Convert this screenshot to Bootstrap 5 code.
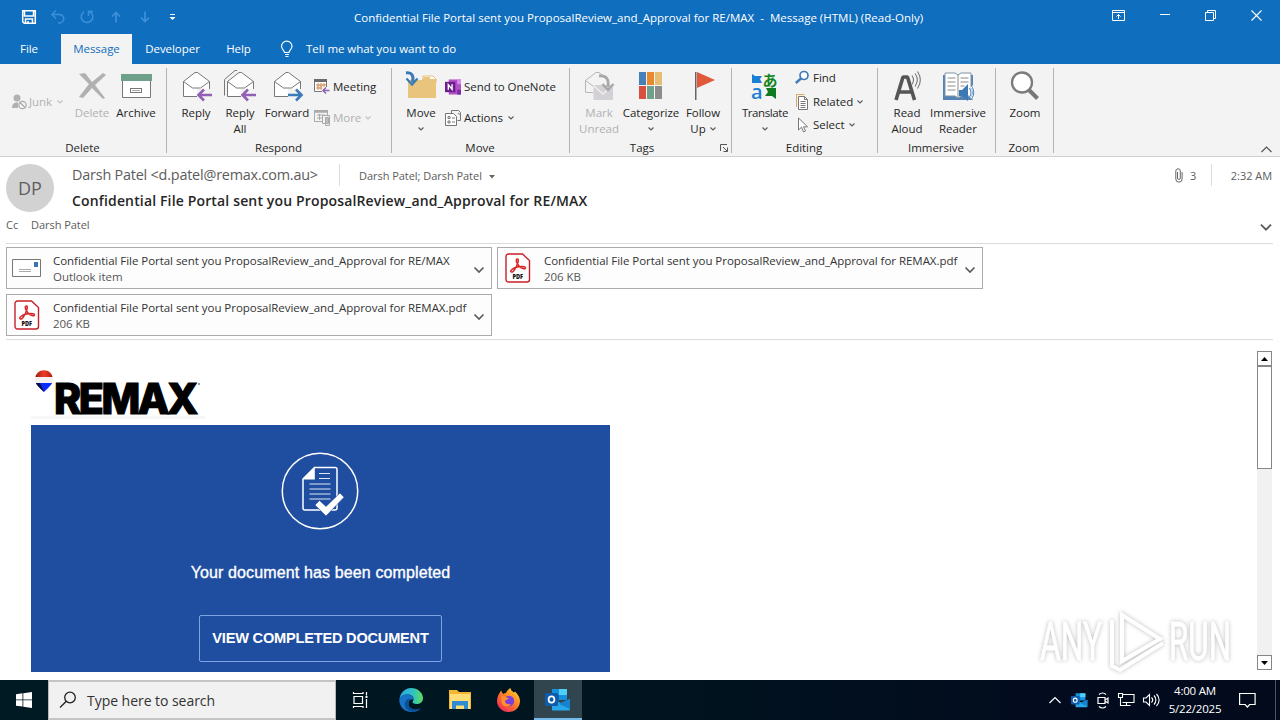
<!DOCTYPE html>
<html lang="en">
<head>
<meta charset="utf-8">
<meta name="viewport" content="width=device-width, initial-scale=1">
<title>Message (HTML) (Read-Only)</title>
<link rel="stylesheet" href="https://cdn.jsdelivr.net/npm/bootstrap@5.3.0/dist/css/bootstrap.min.css">
<style>
html,body{height:720px;overflow:hidden}
body{font-family:"Open Sans","Noto Sans",sans-serif;font-size:11.5px;line-height:16px;letter-spacing:-.04px;color:#262626;background:#fff}
svg{display:block;flex:none;overflow:visible}
.chrome{background:#106ebe;color:#fff}
.titlebar{height:34px}
.t-title{letter-spacing:.01px;padding-top:1px}
.quick{width:354px;padding-left:20px}
.quick>*{width:18px;margin-right:11px;display:flex;justify-content:center}
.winbtn{width:46px;height:30px;display:flex;align-items:center;justify-content:center;padding-right:2px}
.tabs{height:30px}
.tabs>*{line-height:30px}
.tab-file{width:61px;padding-left:20px}
.tab-on{width:71px;background:#f3f3f3;color:#106ebe;text-align:center}
.tab-dev{width:81px;text-align:center}
.tab-help{width:51px;text-align:center}
.ribbon{height:93px;background:#f3f3f3;border-bottom:1px solid #d2d0ce}
.grp{position:relative;display:flex;flex-direction:column}
.grp::after{content:"";position:absolute;right:0;top:4px;height:85px;width:1px;background:#b3b3b3}
.grp-main{height:76px;display:flex}
.grp-name{text-align:center;line-height:16px;padding-right:2px}
.big{padding-top:6px;display:flex;flex-direction:column;align-items:center;text-align:center;white-space:nowrap}
.big svg.ico{margin-bottom:3px;width:32px;height:32px}
.small-cmd{display:flex;align-items:center;white-space:nowrap;height:24px}
.w44{width:44px}.w46{width:46px}.w50{width:50px}.w58{width:58px}.w60{width:60px}.w70{width:70px}
.off{color:#b1b1b1}
.tight{letter-spacing:-.4px}
.chev{margin:5px auto}
.msg-head{height:87px;padding:7px 7px 0 6px;border:0;color:#5c5c5c;font-size:11px}
.avatar{width:48px;height:48px;border-radius:50%;background:#d2d2d2;color:#5f5f5f;font-size:18px}
.sender{font-size:14.4px;line-height:22px;width:267px;white-space:nowrap;letter-spacing:-.2px}
.meta{padding-top:2px}
.vline{width:1px;height:22px;background:#dcdcdc}
.subject{font-size:14px;font-weight:600;line-height:20px;color:#262626;white-space:nowrap;letter-spacing:.15px}
.rule{height:1px;background:#dcdcdc;margin:0 7px 0 6px}
.att{width:486px;height:42px;border:1px solid #ababab;background:#fdfdfd;line-height:16px;color:#333;display:flex;align-items:center;white-space:nowrap}
.att .att-ico{width:46px;padding-left:5px;flex:none}
.att .att-ico.doc{padding-left:7px}
.att .att-txt{padding-top:2px}
.att .att-sub{color:#555}
.reading{height:340px}
.mail{padding:27px 0 0 31px;width:1257px}
.card-blue{width:579px;height:247px;background:#1f4ea1;color:#fff;margin-top:4px;font-family:"Liberation Sans",Arial,sans-serif;display:flex;flex-direction:column;align-items:center}
.done{font-size:16px;line-height:20px;margin-top:33px;letter-spacing:.13px;-webkit-text-stroke:.35px #fff}
.view{width:243px;height:47px;border:1px solid #7ea3e4;border-radius:2px;margin-top:32px;font-weight:700;font-size:14.6px;letter-spacing:-.22px;display:flex;align-items:center;justify-content:center;padding-bottom:2px;white-space:nowrap}
.scroller{width:15px;height:319px;background:#f1f1f1;margin-top:11px;display:flex;flex-direction:column}
.scroller div{border:1px solid #868686;background:#fff;display:flex;align-items:center;justify-content:center}
.watermark{position:absolute;left:1030px;top:602px;filter:drop-shadow(0 0 2px #bbb)}
.taskbar{height:40px;background:linear-gradient(90deg,#001a23 0,#00151f 45%,#020c1e 80%,#020a1c);color:#fff}
.search{width:288px;height:40px;background:#f1f1f1;border:1px solid #b8b8b8;border-top:2px solid #c4c4c4;border-bottom:2px solid #c4c4c4;color:#333;font-size:14px;padding-left:10px}
.task{width:49px;height:40px;display:flex;align-items:center;justify-content:center}
.task-on{background:#31454f;border-bottom:2px solid #76b9ed;padding-top:2px}
.clock{width:56px;text-align:center;font-size:11.5px;line-height:18px;letter-spacing:-.2px;white-space:nowrap;display:flex;flex-direction:column;align-items:center}
</style>
</head>
<body>
<svg width="0" height="0" class="position-absolute">
<defs>
<symbol id="cv" viewBox="0 0 6 6"><path d="M.5 1.500L3 4 5.500 1.500" fill="none" stroke="currentColor" stroke-opacity=".75" stroke-width="1.100"/></symbol>
<symbol id="down" viewBox="0 0 12 8"><path d="M1.500 1.500L6 6l4.500-4.500" fill="none" stroke="#5c5c5c" stroke-width="1.700"/></symbol>
<symbol id="env" viewBox="0 0 32 32"><path d="M3.500 11.500L15 2.500h2.500L29.500 11.500V26.500h-26z" fill="#fff" stroke="#777"/><path d="M3.500 11.500l9 6.500h8l9-6.500" fill="none" stroke="#777"/></symbol>
<symbol id="pdf" viewBox="0 0 26 30"><path d="M3.500 1h14L24.500 7.500V26.500a2.500 2.500 0 0 1-2.500 2.500H3.500A2.500 2.500 0 0 1 1 26.500V3.500A2.500 2.500 0 0 1 3.500 1z" fill="#fff" stroke="#c8202a" stroke-width="1.400"/><path d="M12.500 6c-2.500 0-.8 4.500 1.500 7 2 2.500 6.500 3.700 6.500 1.800 0-2-6-1.600-9.200-.5-3.300 1.200-6.500 3.200-5.300 4.500 1.600 1.400 4-2.300 5.500-5.500 1.300-3 2.700-7.300 1-7.300z" fill="none" stroke="#dc2626" stroke-width="1.500"/><text x="7.500" y="25.500" font-family="Open Sans,sans-serif" font-size="6" font-weight="800" fill="#111" textLength="10.500" lengthAdjust="spacingAndGlyphs">PDF</text></symbol>
<symbol id="outlook" viewBox="0 0 26 26"><path d="M7 2h14a1 1 0 0 1 1 1v10H7z" fill="#1490df"/><path d="M14 2h8v6h-8z" fill="#50d0f8"/><path d="M7 8h7v6H7z" fill="#0a62b5"/><path d="M7 12l9 4 9-4v10a1.500 1.500 0 0 1-1.500 1.500H7z" fill="#28a8ea"/><path d="M25 12v10L14 17z" fill="#1683cf"/><rect y="6" width="13" height="13" rx="1" fill="#0f5cad"/><ellipse cx="6.500" cy="12.500" rx="2.900" ry="3.200" fill="none" stroke="#fff" stroke-width="1.700"/></symbol>
</defs>
</svg>

<header class="chrome">
  <div class="titlebar d-flex">
    <div class="quick d-flex align-items-center">
      <span><svg width="16" height="16" viewBox="0 0 16 16" fill="none" stroke="#fff" stroke-width="1.500"><path d="M1.700 1.700h12.600v12.600H3.200l-1.500-1.500zM3.500 2v5h9V2M4.500 14v-4h7v4M7 12v2"/></svg></span>
      <span><svg width="16" height="16" viewBox="0 0 16 16" fill="none" stroke="#3d90da" stroke-width="1.500"><path d="M6 1.500L2 5.500l4 4M2 5.500h7.500a4 4 0 0 1 0 8.500H8"/></svg></span>
      <span><svg width="16" height="16" viewBox="0 0 16 16" fill="none" stroke="#3d90da" stroke-width="1.500"><path d="M5 2.800a5.800 5.800 0 1 0 6 0M9.500 7V2.500H14"/></svg></span>
      <span><svg width="12" height="14" viewBox="0 0 12 14" fill="none" stroke="#3d90da" stroke-width="1.700"><path d="M6 12.500v-10M2 6.500l4-4 4 4"/></svg></span>
      <span><svg width="12" height="14" viewBox="0 0 12 14" fill="none" stroke="#3d90da" stroke-width="1.700"><path d="M6 1.500v10M2 7.500l4 4 4-4"/></svg></span>
      <span class="pe-1"><svg width="7" height="8" viewBox="0 0 7 8"><path d="M1 1h5v1H1zM.5 4h6l-3 3z" fill="#fff"/></svg></span>
    </div>
    <div class="t-title text-nowrap lh-1 align-self-center">Confidential File Portal sent you ProposalReview_and_Approval for RE/MAX&nbsp; -&nbsp; Message (HTML) (Read-Only)</div>
    <div class="ms-auto d-flex">
      <div class="winbtn"><svg width="13" height="11" viewBox="0 0 13 11" fill="none" stroke="#fff"><path d="M.5.500h12v10H.5zM.5 2.500h12M6.500 9V4.500M4.500 6.500l2-2 2 2"/></svg></div>
      <div class="winbtn"><svg width="11" height="11" viewBox="0 0 11 11" stroke="#fff"><path d="M1 4.500h10"/></svg></div>
      <div class="winbtn"><svg width="11" height="11" viewBox="0 0 11 11" fill="none" stroke="#fff"><path d="M.5 2.500h8v8h-8zM2.500 2.500V.500h8v8h-2"/></svg></div>
      <div class="winbtn"><svg width="11" height="11" viewBox="0 0 11 11" stroke="#fff" stroke-width="1.100"><path d="M.5.500l10 10M10.500.500l-10 10"/></svg></div>
    </div>
  </div>
  <nav class="tabs d-flex">
    <span class="tab-file">File</span><span class="tab-on">Message</span><span class="tab-dev">Developer</span><span class="tab-help">Help</span>
    <span class="d-flex align-items-center ps-3"><svg width="14" height="18" viewBox="0 0 14 18" fill="none" stroke="#fff" stroke-width="1.200"><path d="M4.500 12.500c0-2-3-3-3-6.200a5.200 5.200 0 0 1 10.500 0c0 3.200-3 4.200-3 6.200zM5 14.500h4M5.500 16.500h3"/></svg><span class="ms-2 ps-1">Tell me what you want to do</span></span>
  </nav>
</header>

<div class="ribbon d-flex position-relative">
  <section class="grp" style="width:167px"><div class="grp-main">
    <div class="w70 off d-flex align-items-center justify-content-start text-nowrap" style="padding-left:11px"><svg width="17" height="18" viewBox="0 0 17 18"><circle cx="6" cy="5" r="3.500" fill="#b1b1b1"/><path d="M1 15c0-5 3-6 6-5.500L7 15z" fill="#b1b1b1"/><circle cx="11.500" cy="12" r="3.700" fill="#f3f3f3" stroke="#aaa" stroke-width="1.200"/><path d="M9 9.500l5 5" stroke="#aaa" stroke-width="1.200"/></svg><span style="margin-left:1px">Junk</span><svg style="margin-left:5px" width="6" height="6"><use href="#cv"/></svg></div>
    <div class="big w44 off"><svg class="ico" viewBox="0 0 32 32"><path d="M3 4l6-1 7 9 11-9 3 2-11 10 10 13-2 1-11-11-9 10-4-1 10-13z" fill="#b1b1b1"/></svg>Delete</div>
    <div class="big w44"><svg class="ico" viewBox="0 0 32 32"><path d="M2.500 10v17.500h28V10" fill="#fff" stroke="#777"/><rect x="1" y="4" width="31" height="7" fill="#6fa08c"/><rect x="10.500" y="18.500" width="11" height="4" fill="#fff" stroke="#777"/><path d="M12 20.500h8" stroke="#aaa"/></svg>Archive</div>
  </div><div class="grp-name">Delete</div></section>

  <section class="grp" style="width:225px"><div class="grp-main" style="padding-left:7px">
    <div class="big w44"><svg class="ico" viewBox="0 0 32 32"><use href="#env"/><path d="M17 19h15v10H17z" fill="#f3f3f3"/><path d="M32 25H19M24 19.500L18.500 25l5.500 5.500" fill="none" stroke="#9160b5" stroke-width="2.600"/></svg>Reply</div>
    <div class="big w44"><svg class="ico" viewBox="0 0 32 32"><path d="M.5 25.500V9.500L11 .5h2" fill="none" stroke="#777"/><use href="#env"/><path d="M17 19h15v10H17z" fill="#f3f3f3"/><path d="M32 25H19M24 19.500L18.500 25l5.500 5.500" fill="none" stroke="#9160b5" stroke-width="2.600"/></svg>Reply<br>All</div>
    <div class="big w50"><svg class="ico" viewBox="0 0 32 32"><use href="#env"/><path d="M17 19h15v10H17z" fill="#f3f3f3"/><path d="M17 25h13M25 19.500l5.500 5.500-5.500 5.500" fill="none" stroke="#3a7ab8" stroke-width="2.600"/></svg>Forward</div>
    <div class="d-flex flex-column" style="padding:11px 0 0 2px">
      <div class="small-cmd"><svg width="16" height="16" viewBox="0 0 16 16"><path d="M.5.500h12v12H.5z" fill="#fff" stroke="#777"/><path d="M0 0h13v3H0z" fill="#6b6b6b"/><path d="M3 5h2v2H3zM6 5h2v2H6zM9 5h2v2H9zM3 8h2v2H3zM6 8h2v2H6z" fill="none" stroke="#c87a3a" stroke-width=".8"/><path d="M8 8h8v7H8z" fill="#f3f3f3"/><path d="M15.500 11.500H9.500M12 8.500l-3 3 3 3" fill="none" stroke="#9160b5" stroke-width="1.500"/></svg><span style="margin-left:3px">Meeting</span></div>
      <div class="small-cmd off" style="margin-top:7px"><svg width="17" height="16" viewBox="0 0 17 16" fill="none" stroke="#aaa"><path d="M.5.500h13v11H.5zM3 5h8M3 8h6M5.500 4v6"/><path d="M0 1.500h14" stroke-width="2.500"/><path d="M8.500 5.500h7v10h-4v-2h-3z" fill="#f3f3f3"/><path d="M11.500 7.500h3v6h-3z" fill="#bbb"/></svg><span style="margin-left:2px">More</span><svg class="ms-1" width="6" height="6"><use href="#cv"/></svg></div>
    </div>
  </div><div class="grp-name">Respond</div></section>

  <section class="grp" style="width:178px"><div class="grp-main" style="padding-left:6px">
    <div class="big w46"><svg class="ico" viewBox="0 0 32 32"><path d="M18 6h10l3 3v4H18z" fill="#fff" stroke="#e5c07b"/><path d="M3 10h14l2-3h6v2h6v19H3z" fill="#e8c47c"/><path d="M1 3c6-1 8 3 6.500 9" fill="none" stroke="#3a7ab8" stroke-width="3"/><path d="M1.500 8.500l5.500 6 5.500-6" fill="none" stroke="#3a7ab8" stroke-width="2.200"/></svg>Move<svg class="chev" width="6" height="6"><use href="#cv"/></svg></div>
    <div class="d-flex flex-column" style="padding:11px 0 0 1px">
      <div class="small-cmd"><svg width="16" height="16" viewBox="0 0 17 16"><rect x="4" width="13" height="16" fill="#b14fc5"/><path d="M13 0h4v5h-4z" fill="#d98af0"/><path d="M13 11h4v5h-4z" fill="#7b2aa5"/><rect y="2.500" width="11" height="11" fill="#6b1f8c"/><path d="M3.500 11V5.500l4 5V5" fill="none" stroke="#fff" stroke-width="1.500"/></svg><span style="margin-left:3px">Send to OneNote</span></div>
      <div class="small-cmd" style="margin-top:7px"><svg width="17" height="16" viewBox="0 0 17 16" fill="none" stroke="#777"><path d="M6.500 3V.500h7l2 2v8h-3"/><path d="M.5 3.500h8l3 3v9H.5z" fill="#fff"/><path d="M3 6.500h2v2H3zM3 11h2v2H3zM7 8h3M7 12h3M13 3l2 1.500"/></svg><span style="margin-left:2px">Actions</span><svg style="margin-left:5px" width="6" height="6"><use href="#cv"/></svg></div>
    </div>
  </div><div class="grp-name">Move</div></section>

  <section class="grp" style="width:162px"><div class="grp-main" style="padding-left:7px">
    <div class="big w44 off"><svg class="ico" viewBox="0 0 32 32"><path d="M2.500 22.500v-12L13 2.500h3l10 8" fill="none" stroke="#b5b5b5"/><path d="M2.500 10.500l8 6M10 22.500H3" fill="none" stroke="#b5b5b5"/><path d="M10.500 15h19.500v15H10.500z" fill="#d4d1d6"/><path d="M11 16l9 8 9-8" fill="none" stroke="#eee" stroke-width="1.500"/><path d="M16 6c8-1 10 4 9 11" fill="none" stroke="#a8a8a8" stroke-width="2.800"/><path d="M19.500 14l5.500 6 5.500-6" fill="none" stroke="#a8a8a8" stroke-width="2.400"/></svg>Mark<br>Unread</div>
    <div class="big w60"><svg class="ico" viewBox="0 0 32 32"><path d="M4 2h7v13H4z" fill="#4680b8"/><path d="M12 2h7v13h-7z" fill="#e8892f"/><path d="M20 2h7v13h-7z" fill="#e6bd73"/><path d="M4 16h7v13H4z" fill="#d94f3d"/><path d="M12 16h7v13h-7z" fill="#6fa08c"/><path d="M20 16h7v13h-7z" fill="#8c8c8c"/></svg>Categorize<svg class="chev" width="6" height="6"><use href="#cv"/></svg></div>
    <div class="big w44"><svg class="ico" viewBox="0 0 32 32"><path d="M10 2l18 8-18 8z" fill="#e0593a"/><path d="M8 2h1.500v28H8z" fill="#666"/></svg>Follow<span class="d-flex align-items-center">Up<svg class="ms-1" width="6" height="6"><use href="#cv"/></svg></span></div>
  </div><div class="grp-name" style="padding-right:18px">Tags</div>
  <svg class="position-absolute" style="right:4px;bottom:4px" width="8" height="8" viewBox="0 0 8 8" fill="none" stroke="#555"><path d="M.5 7V.500H7M3 3l4 4M7.500 3.500v4h-4"/></svg></section>

  <section class="grp" style="width:146px"><div class="grp-main" style="padding-left:8px">
    <div class="big w50"><svg class="ico" viewBox="0 0 32 32"><path d="M3 4l3 2h7l-2 3 2 4H3z" fill="#1b7fd4"/><text x="13.500" y="15.500" font-family="Noto Sans CJK JP,sans-serif" font-size="15" font-weight="700" fill="#16851c">あ</text><text x="2" y="29" font-family="Open Sans,sans-serif" font-size="20" font-weight="600" fill="#1b7fd4">a</text><path d="M17 18h10v11l-4-3h-7l3-4z" fill="#0f7a20"/></svg><span class="tight">Translate</span><svg class="chev" width="6" height="6"><use href="#cv"/></svg></div>
    <div class="d-flex flex-column" style="padding:2px 0 0 5px">
      <div class="small-cmd"><svg width="16" height="16" viewBox="0 0 16 16"><circle cx="9" cy="5.500" r="4" fill="#fff" stroke="#3f7cb8" stroke-width="1.700"/><path d="M6 8.500L.8 13" stroke="#3f7cb8" stroke-width="2.400"/></svg><span style="padding-left:2px">Find</span></div>
      <div class="small-cmd" style="height:23px"><svg width="16" height="16" viewBox="0 0 16 16" fill="none" stroke="#777"><path d="M1.500 13V.500h8" stroke="#e0a860"/><path d="M3.500 2.500h6l3 3v10h-9z" fill="#fff"/><path d="M5.500 7.500h5M5.500 9.500h5M5.500 11.500h5M5.500 13.500h5M9.500 2.500v3h3"/></svg><span style="padding-left:2px">Related</span><svg class="ms-1" width="6" height="6"><use href="#cv"/></svg></div>
      <div class="small-cmd"><svg width="16" height="16" viewBox="0 0 16 16"><path d="M3.500 1v12l3-2.800L8.500 15l2-1-2-4.200h4z" fill="#fff" stroke="#777"/></svg><span style="padding-left:2px">Select</span><svg class="ms-1" width="6" height="6"><use href="#cv"/></svg></div>
    </div>
  </div><div class="grp-name">Editing</div></section>

  <section class="grp" style="width:118px"><div class="grp-main" style="padding-left:7px">
    <div class="big w44"><svg class="ico" viewBox="0 0 32 32"><path d="M5 30L12 7h4.500l7 23M8.500 22h11.500" fill="none" stroke="#555" stroke-width="3.600" stroke-linejoin="bevel"/><path d="M21 5.500c2 3 2 6 0 9M24 3.500c3 4 3 8.500 0 13M26.500 1.500c4 6 4 11 0 17" fill="none" stroke="#777" stroke-width="1.100"/></svg>Read<br>Aloud</div>
    <div class="big w58"><svg class="ico" viewBox="0 0 32 32"><path d="M1 5h30v25H1z" fill="#5484b4"/><path d="M3 3h10l3 2 3-2h10v23H19l-3 2-3-2H3z" fill="#fff" stroke="#7f93a8"/><path d="M16 5v22M5.500 8h8M5.500 12h8M5.500 16h8M5.500 20h8M18.500 8h8M18.500 12h8M18.500 16h4" stroke="#8a8a8a"/><path d="M17 20h3l6-6v17l-6-5h-3z" fill="#3c78b4"/><path d="M27.500 18c2 3 2 6 0 9M29.500 16c3 4 3 9 0 13" stroke="#fff" stroke-width="2.400" fill="none"/><path d="M27.500 18c2 3 2 6 0 9M29.500 16c3 4 3 9 0 13" stroke="#3c78b4" fill="none"/></svg>Immersive<br>Reader</div>
  </div><div class="grp-name">Immersive</div></section>

  <section class="grp" style="width:58px"><div class="grp-main" style="padding-left:7px">
    <div class="big w44"><svg class="ico" viewBox="0 0 32 32"><path d="M19 19l9.500 9.500" stroke="#777" stroke-width="4"/><circle cx="13" cy="12.500" r="10" fill="#fff" stroke="#7b7b7b" stroke-width="2.300"/></svg>Zoom</div>
  </div><div class="grp-name">Zoom</div></section>
  <svg class="position-absolute" style="right:8px;bottom:3px" width="11" height="7" viewBox="0 0 11 7"><path d="M.5 6l5-5 5 5" fill="none" stroke="#555" stroke-width="1.200"/></svg>
</div>

<div class="msg-head">
  <div class="d-flex">
    <div class="avatar d-flex align-items-center justify-content-center me-3"><span>DP</span></div>
    <div class="flex-grow-1" style="margin-left:2px">
      <div class="d-flex align-items-center">
        <span class="sender">Darsh Patel &lt;d.patel@remax.com.au&gt;</span><span class="vline"></span>
        <span style="margin-left:19px" class="meta">Darsh Patel; Darsh Patel</span><svg style="margin:3px 0 0 7px" width="6" height="4"><path d="M0 0h6L3 3.500z" fill="#666"/></svg>
        <svg class="ms-auto" width="8" height="15" viewBox="0 0 8 15" fill="none" stroke="#666"><path d="M2.500 4v6a1.300 1.300 0 0 0 2.800 0V3a2.200 2.200 0 0 0-4.500 0v8a3 3 0 0 0 6.300 0V4"/></svg><span class="meta" style="margin-left:7px;width:21px">3</span><span class="vline"></span><span class="meta text-end text-nowrap" style="width:61px;padding-right:1px">2:32 AM</span>
      </div>
      <div class="subject" style="margin-top:5px">Confidential File Portal sent you ProposalReview_and_Approval for RE/MAX</div>
    </div>
  </div>
  <div class="d-flex align-items-center" style="margin-top:5px"><span style="width:25px">Cc</span><span>Darsh Patel</span><svg class="ms-auto mt-1" width="14" height="9"><use href="#down"/></svg></div>
</div>
<div class="rule" style="margin-top:-1px"></div>
<div class="d-flex flex-wrap align-content-start" style="gap:5px;padding:3px 0 0 6px;height:95px">
  <div class="att"><span class="att-ico"><svg width="30" height="18" viewBox="0 0 30 18"><path d="M.5.500h28v17H.5z" fill="#fff" stroke="#777"/><path d="M22 3h4v5h-4z" fill="#3f74b0"/><path d="M7 10.500h12M7 12.500h12" stroke="#aaa"/></svg></span><span class="att-txt">Confidential File Portal sent you ProposalReview_and_Approval for RE/MAX<br><span class="att-sub">Outlook item</span></span><svg class="ms-auto mt-1" style="margin-right:6px" width="12" height="8"><use href="#down"/></svg></div>
  <div class="att"><span class="att-ico doc"><svg width="26" height="30"><use href="#pdf"/></svg></span><span class="att-txt">Confidential File Portal sent you ProposalReview_and_Approval for REMAX.pdf<br><span class="att-sub">206 KB</span></span><svg class="ms-auto mt-1" style="margin-right:6px" width="12" height="8"><use href="#down"/></svg></div>
  <div class="att"><span class="att-ico doc"><svg width="26" height="30"><use href="#pdf"/></svg></span><span class="att-txt">Confidential File Portal sent you ProposalReview_and_Approval for REMAX.pdf<br><span class="att-sub">206 KB</span></span><svg class="ms-auto mt-1" style="margin-right:6px" width="12" height="8"><use href="#down"/></svg></div>
</div>
<div class="rule"></div>

<main class="reading d-flex">
  <div class="mail">
    <svg width="180" height="54" viewBox="0 0 180 54"><defs><clipPath id="bal"><path d="M4 13c0-13 18-13 18 0 0 4-5 8-9 12-4-4-9-8-9-12z"/></clipPath><linearGradient id="rd"><stop stop-color="#8c1c14"/><stop offset=".5" stop-color="#ee3a22"/><stop offset="1" stop-color="#a8170f"/></linearGradient></defs><g clip-path="url(#bal)"><path d="M3 3h20v7H3z" fill="url(#rd)"/><path d="M3 10h20v6H3z" fill="#f5f1f1"/><path d="M3 16h20v9H3z" fill="#0c2cff"/><path d="M3 16h6l4 9H3z" fill="#08103f"/></g><text x="23" y="47" font-family="Inter,sans-serif" font-weight="800" font-size="42.500" letter-spacing="-2.500" textLength="142" lengthAdjust="spacingAndGlyphs" stroke="#000" stroke-width="1.200">REMAX</text><circle cx="168" cy="17" r="1" fill="#777"/><path d="M0 49h174v3H0z" fill="#f8f6f6"/></svg>
    <div class="card-blue">
      <svg style="margin:27px 2px 0 0" width="78" height="78" viewBox="0 0 78 78"><circle cx="39" cy="39" r="37.700" fill="none" stroke="#fff" stroke-width="1.500"/><path d="M22 27L33.500 15.500H54a2 2 0 0 1 2 2V56a2 2 0 0 1-2 2H24a2 2 0 0 1-2-2z" fill="none" stroke="#fff" stroke-width="1.500"/><path d="M22 27.500L33.800 15.500v12z" fill="#fff"/><path d="M38 21.500h11M38 26.500h11M28.500 32h21M28.500 37h21M28.500 42h21M28.500 47h21" stroke="#dfe8f6"/><path d="M34 53l4.500-4.500 6.500 6 14-13.500 4 4.300L45 64z" fill="#fff" stroke="#1f4ea1" stroke-width=".6"/></svg>
      <div class="done">Your document has been completed</div>
      <div class="view">VIEW COMPLETED DOCUMENT</div>
    </div>
  </div>
  <div class="scroller"><div style="height:15px"><svg width="7" height="4"><path d="M3.500 0L7 4H0z" fill="#000"/></svg></div><div style="height:103px"></div><div class="mt-auto" style="height:15px"><svg width="7" height="4"><path d="M3.500 4L7 0H0z" fill="#000"/></svg></div></div>
</main>
<svg class="watermark" width="210" height="76" viewBox="0 0 210 76"><g font-family="Roboto,sans-serif" font-weight="400" font-size="53" fill="#fff" stroke="#fff" stroke-width=".8"><text x="10" y="58" textLength="62" lengthAdjust="spacingAndGlyphs">ANY</text><text x="139" y="58" textLength="62" lengthAdjust="spacingAndGlyphs">RUN</text></g><g fill="none" stroke="#fff" stroke-width="4"><path d="M92 54V13l38 24-38 22z"/><path d="M82 18v46l8 4 43-27"/></g></svg>

<footer class="taskbar d-flex">
  <div class="task" style="width:48px"><svg width="16" height="16" viewBox="0 0 16 16" fill="#fff"><path d="M0 2.200l6.500-.9v6.200H0zM7.300 1.200L16 0v7.500H7.300zM0 8.300h6.500v6.300L0 13.700zM7.300 8.300H16V16l-8.700-1.200z"/></svg></div>
  <div class="search d-flex align-items-center"><svg width="18" height="18" viewBox="0 0 18 18" fill="none" stroke="#222" stroke-width="1.300"><circle cx="11" cy="6.500" r="5.300"/><path d="M7.300 10.300L1 16.500"/></svg><span style="margin:1px 0 0 10px">Type here to search</span></div>
  <div class="task"><svg width="17" height="16" viewBox="0 0 17 16" fill="none" stroke="#fff" stroke-width="1.200"><path d="M1 1.500h10M1 14.500h10M2 4.500h8.500v7H2zM1.500 0v2M11 0v2M1.500 14v2M11 14v2M14.500 0v3.500M14.500 7v9"/><path d="M13.500 4h2v2h-2z" fill="#fff" stroke="none"/></svg></div>
  <div class="task" style="width:51px"><svg width="24" height="24" viewBox="0 0 24 24"><defs><linearGradient id="e1" x1="0" x2="1"><stop stop-color="#2ba7e8"/><stop offset=".55" stop-color="#30c0c8"/><stop offset="1" stop-color="#5ddc5a"/></linearGradient></defs><path d="M.5 11C1.500 4 6.500 0 12 0c7 0 12 5 12 10 0 4-3 6-6.500 6-3 0-4-1.200-4-2 0-.7 1-1 1-3 0-2.500-2.500-4.500-6-4.500C4.500 6.500 1.500 8.500.5 11z" fill="url(#e1)"/><path d="M.3 12C.5 8.500 4 6.400 8 6.400c3.500 0 6.500 2 6.500 5 0 0-5-1-5 4.600 0 4 4 5.500 7 5.500 2 0 4-.5 5.500-1.500C20 22.500 16.500 24 12.500 24 5.500 24 .2 18.500.3 12z" fill="#1673c8"/><path d="M9.600 15c-.5 5 5 8 11.800 5.500C17 26 7 24.500 5.800 17c-.5-4 3-7 6.200-6.500-1.500.8-2.300 2.300-2.400 4.500z" fill="#0d4f96"/></svg></div>
  <div class="task" style="width:48px"><svg width="22" height="20" viewBox="0 0 22 20"><path d="M0 0h8l2 2h12v17H0z" fill="#f2b632"/><path d="M1 4h20v15H1z" fill="#ffdd75"/><path d="M3 19v-8h16v8h-4v-3.500H7V19z" fill="#2f8bd2"/></svg></div>
  <div class="task"><svg width="23" height="24" viewBox="0 0 23 24"><defs><linearGradient id="ff" x1="1" y1="0" x2=".2" y2="1"><stop stop-color="#ffe040"/><stop offset=".45" stop-color="#ff8a22"/><stop offset="1" stop-color="#f0265c"/></linearGradient></defs><path d="M2 6l2-3.500L6 6c1-.8 2-1 3-1 1-2 2.500-4 4.500-5 0 2 1.500 3 3.500 4.500l1-1c3 3 5 6 5 9.500C23 19.500 18 24 11.500 24S0 19 0 13c0-2.500.8-5 2-7z" fill="url(#ff)"/><circle cx="12" cy="13" r="5.200" fill="#7a3fe0"/><path d="M5 8c3 0 4 2 7 2-1 2-4 1.500-4 3.500s3 3.500 6 2.500c-2 4-9 3.500-9.500-2C4.300 11 4 10 5 8z" fill="#ff8f26"/></svg></div>
  <div class="task task-on" style="width:48px;margin-left:1px"><svg width="26" height="26"><use href="#outlook"/></svg></div>
  <div class="ms-auto d-flex align-items-center">
    <svg width="12" height="8" viewBox="0 0 12 8" fill="none" stroke="#fff" stroke-width="1.200"><path d="M.5 7L6 1.500 11.500 7"/></svg>
    <svg style="margin-left:10px" width="17" height="17"><use href="#outlook"/></svg>
    <svg style="margin-left:9px" width="12" height="17" viewBox="0 0 12 17" fill="none" stroke="#fff" stroke-width="1.200"><path d="M2 2.500c2-1.800 5-1.800 7 0M2 14.500c2 1.800 5 1.800 7 0M1 5.500h7v6H1zM8 8l3-2v5l-3-2"/></svg>
    <svg style="margin-left:9px" width="17" height="16" viewBox="0 0 17 16" fill="none" stroke="#fff" stroke-width="1.100"><path d="M5 2.500h11v8H4.500M.5 1.500h4v4h-4zM2.500 5.500v8h10M8.500 10.500v3"/></svg>
    <svg style="margin-left:8px" width="17" height="14" viewBox="0 0 17 14" fill="none" stroke="#fff" stroke-width="1.100"><path d="M.5 5v4h2.500l3.500 3.500v-11L3 5zM8.500 4.500c1.500 1.500 1.500 3.500 0 5M11 2.500c2.500 2.500 2.500 6.500 0 9M13.500 1c3.500 3.500 3.500 8.500 0 12"/></svg>
    <div class="clock" style="margin-left:7px"><span>4:00 AM</span><span>5/22/2025</span></div>
    <svg style="margin-left:16px" width="17" height="17" viewBox="0 0 17 17" fill="none" stroke="#fff" stroke-width="1.200"><path d="M.6 1.500h15.500v11h-5.500l-2.200 2.500-2.300-2.500H.6z"/></svg>
    <div style="width:19px"></div><div style="width:1px;height:40px;background:#4a5565"></div><div style="width:4px"></div>
  </div>
</footer>
<script src="https://cdn.jsdelivr.net/npm/bootstrap@5.3.0/dist/js/bootstrap.bundle.min.js"></script>
</body>
</html>
